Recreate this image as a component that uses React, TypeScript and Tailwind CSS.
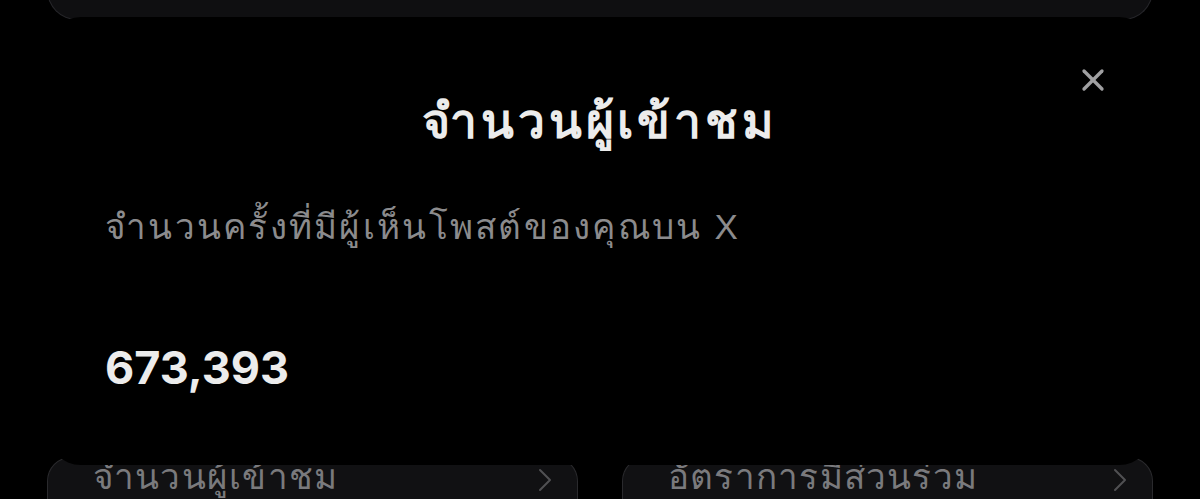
import { X, ChevronRight } from "lucide-react";

const THAI = "font-['Liberation_Sans',sans-serif]";

export default function App() {
  return (
    <div className="relative h-[499px] w-[1200px] overflow-hidden bg-black">
      {/* screen behind the sheet */}
      <div className="flex h-full flex-col px-[47px]">
        <div className="h-[40px] -mt-[20px] rounded-b-[30px] border border-t-0 border-[#26262a] bg-[#0f0f11]" />
        <div className="flex-1" />
        <div className="-mb-[20px] grid grid-cols-2 gap-[44px]">
          <StatCard label="จำนวนผู้เข้าชม" />
          <StatCard label="อัตราการมีส่วนร่วม" />
        </div>
      </div>

      {/* sheet */}
      <div className="absolute left-[47px] right-[47px] top-[17px] bottom-[34px] rounded-[34px] bg-black px-[58px]">
        <button className="absolute right-[42px] top-[45px] text-[#a0a0a2]">
          <X className="h-[36px] w-[36px]" strokeWidth={2.2} />
        </button>
        <h1 className={`${THAI} pt-[73px] text-center text-[48px] font-bold leading-[64px] tracking-[0.08em] text-[#ececec]`}>
          จำนวนผู้เข้าชม
        </h1>
        <p className={`${THAI} mt-[48px] text-[35px] leading-[50px] tracking-[0.065em] text-[#8b8b8d]`}>
          จำนวนครั้งที่มีผู้เห็นโพสต์ของคุณบน X
        </p>
        <p className="mt-[90px] font-['Inter',sans-serif] text-[45px] font-bold leading-[52px] text-[#ececec]">
          673,393
        </p>
      </div>
    </div>
  );
}

function StatCard({ label }: { label: string }) {
  return (
    <div className="flex h-[62px] items-start justify-between rounded-t-[24px] border border-b-0 border-[#2a2a2d] bg-[#111113] pl-[45px] pr-[12px]">
      <span className={`${THAI} -mt-[4px] text-[35px] leading-[46px] tracking-[0.035em] text-[#7a7a7d]`}>{label}</span>
      <ChevronRight className="mt-[2px] h-[40px] w-[40px] text-[#505053]" strokeWidth={1.2} />
    </div>
  );
}
